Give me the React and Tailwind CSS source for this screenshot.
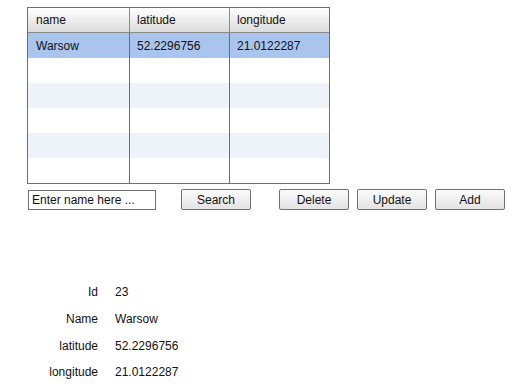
import React from "react";

const rows = [
  ["Warsow", "52.2296756", "21.0122287"],
  ["", "", ""],
  ["", "", ""],
  ["", "", ""],
  ["", "", ""],
  ["", "", ""],
];

function Btn({ children, className = "" }) {
  return (
    <button
      className={
        "h-[21px] w-[70px] rounded-[2px] border border-[#707070] bg-gradient-to-b from-[#fbfbfb] to-[#e3e3e3] text-[12px] leading-none text-[#111] " +
        className
      }
    >
      {children}
    </button>
  );
}

export default function App() {
  return (
    <div
      className="w-[516px] h-[389px] bg-white pt-[7px] pl-[27px] text-[12px] text-[#111]"
      style={{ fontFamily: '"Liberation Sans", Arial, sans-serif' }}
    >
      <div className="w-[303px] border border-[#6e6e6e]">
        <div className="grid grid-cols-[102px_100px_99px] h-[25px] border-b border-[#8a8a8a] bg-gradient-to-b from-[#ffffff] to-[#dcdcdc]">
          <div className="border-r border-[#8a8a8a] pl-[8px] flex items-center">name</div>
          <div className="border-r border-[#8a8a8a] pl-[7px] flex items-center">latitude</div>
          <div className="pl-[7px] flex items-center">longitude</div>
        </div>
        {rows.map((r, i) => (
          <div
            key={i}
            className={
              "grid grid-cols-[102px_100px_99px] h-[25px] " +
              (i === 0 ? "bg-[#a9c5ed]" : i % 2 === 0 ? "bg-[#eef3fa]" : "bg-white")
            }
          >
            <div className="border-r border-[#6e6e6e] pl-[8px] flex items-center">{r[0]}</div>
            <div className="border-r border-[#6e6e6e] pl-[7px] flex items-center">{r[1]}</div>
            <div className="pl-[7px] flex items-center">{r[2]}</div>
          </div>
        ))}
      </div>

      <div className="flex items-center mt-[5px] h-[21px]">
        <div className="ml-[1px] h-[20px] w-[128px] border border-[#707070] bg-white pl-[3px] flex items-center text-[12px]">
          Enter name here ...
        </div>
        <Btn className="ml-[25px]">Search</Btn>
        <Btn className="ml-[28px]">Delete</Btn>
        <Btn className="ml-[8px]">Update</Btn>
        <Btn className="ml-[8px]">Add</Btn>
      </div>

      <div className="mt-[69px] ml-[-9px] flex flex-col">
        {[
          ["Id", "23"],
          ["Name", "Warsow"],
          ["latitude", "52.2296756"],
          ["longitude", "21.0122287"],
        ].map(([l, v]) => (
          <div key={l} className="flex items-center h-[26.67px]">
            <div className="w-[80px] text-right">{l}</div>
            <div className="ml-[17px]">{v}</div>
          </div>
        ))}
      </div>
    </div>
  );
}
